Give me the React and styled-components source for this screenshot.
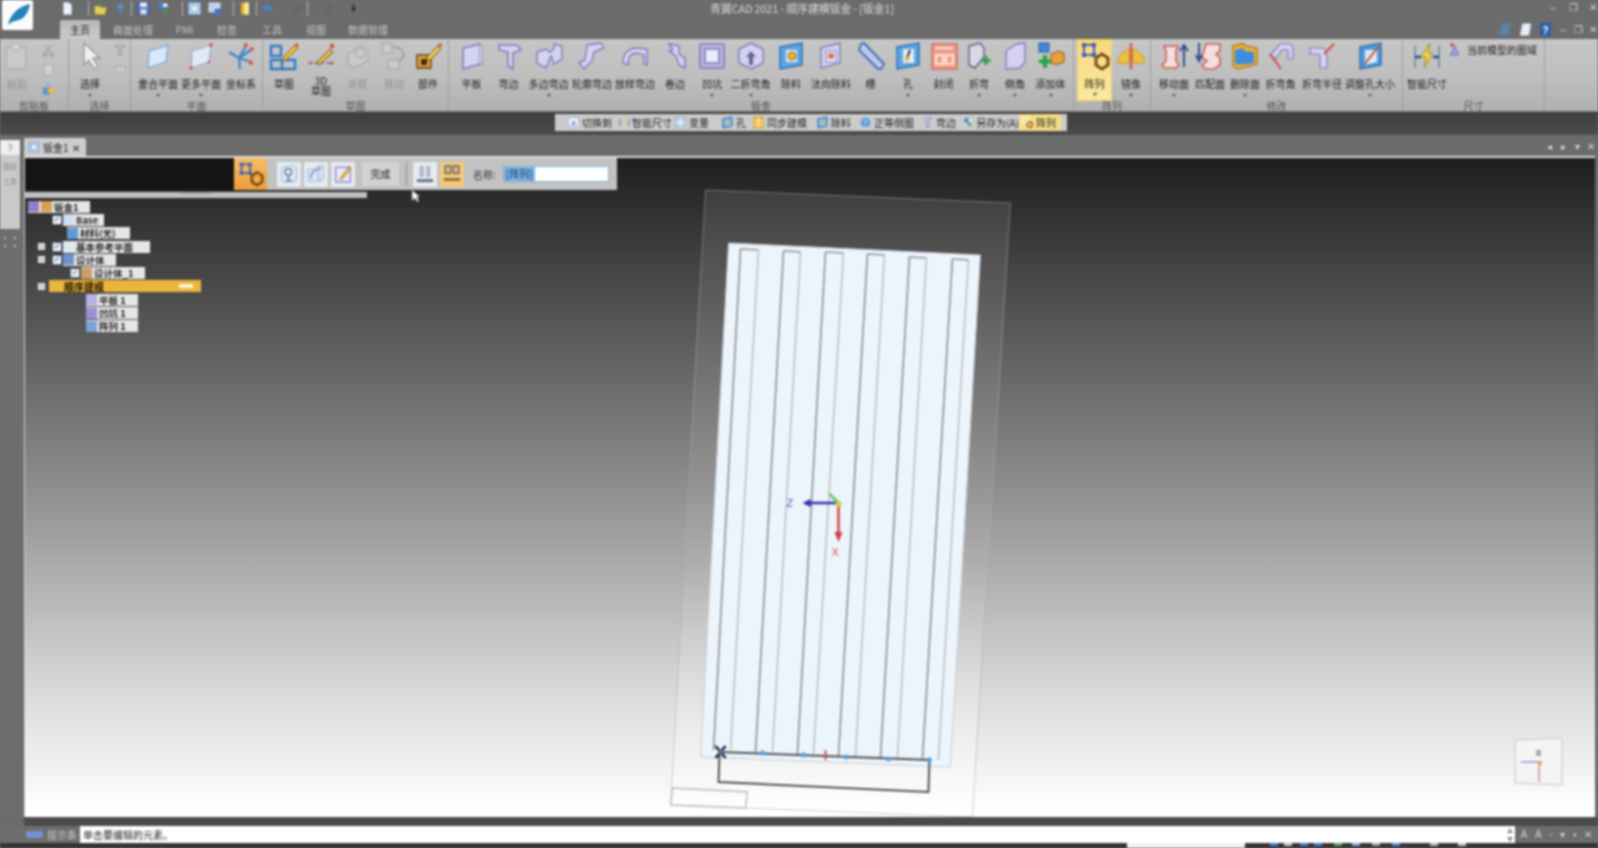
import React from "react";
import styled, { createGlobalStyle, css } from "styled-components";

const Global = createGlobalStyle`
  html, body { margin: 0; padding: 0; background: #6a6a6a; overflow: hidden; }
  * { box-sizing: border-box; }
`;

const P = { f: "#d4d2f0", l: "#ecebfa", s: "#7f7ab8" };

// ribbon pictures, all on a 30x30 grid
const art = {
  paste: <><rect x="4" y="6" width="20" height="22" rx="2" fill="#cdcdcd" stroke="#a5a5a5" strokeWidth="1.5" /><rect x="10" y="3" width="8" height="6" fill="#dedede" stroke="#a5a5a5" /></>,
  cut: <><path d="M8 4l12 14M21 4L9 18" stroke="#8c8c8c" strokeWidth="2" /><circle cx="8" cy="23" r="3.5" fill="none" stroke="#8c8c8c" strokeWidth="2" /><circle cx="21" cy="23" r="3.5" fill="none" stroke="#8c8c8c" strokeWidth="2" /></>,
  copy: <><path d="M8 6h10l5 5v14H8z" fill="#ddd" stroke="#aaa" strokeWidth="2" /><path d="M12 14h8M12 19h8" stroke="#bbb" strokeWidth="2" /></>,
  brush: <><rect x="5" y="14" width="12" height="12" fill="#5b9be0" stroke="#2f6db5" /><circle cx="20" cy="19" r="6" fill="#f1c24a" stroke="#b98a20" /><rect x="12" y="3" width="5" height="8" fill="#7ab0ea" /></>,
  arrow: <path d="M9 2v22l5-5 5 9 4-2-5-9h7z" fill="#f1f1f1" stroke="#959595" strokeWidth="1.3" />,
  filter: <><path d="M4 5h20l-8 9v9l-4 2V14z" fill="#bbb" stroke="#8a8a8a" strokeWidth="2" /></>,
  box: <rect x="5" y="8" width="20" height="14" rx="3" fill="#cfcfcf" stroke="#999" strokeWidth="2" />,
  plane: <path d="M6 10L25 4l-2 17L5 27z" fill="#dbe7f5" stroke="#7fb0e0" strokeWidth="1.5" />,
  plane2: <><path d="M6 10L25 4l-2 17L5 27z" fill="#e3e9f4" stroke="#8fa8cc" strokeWidth="1.2" /><g fill="#d9483a"><circle cx="25" cy="4" r="1.7" /><circle cx="5" cy="27" r="1.7" /><circle cx="23" cy="21" r="1.2" /></g></>,
  axes: <><path d="M13 17L20 5M13 17L3 11M13 17l1 11M13 17l12 4M13 17l13-9" stroke="#3c84c8" strokeWidth="2.2" fill="none" /><g fill="#e0503e"><circle cx="20" cy="4" r="2" /><circle cx="26" cy="8" r="2" /><circle cx="25" cy="22" r="2" /></g></>,
  sketch: <><rect x="2" y="5" width="10" height="10" fill="none" stroke="#2f78c8" strokeWidth="2.4" /><path d="M2 19h24v9H2zM13 19v9" fill="none" stroke="#2f78c8" strokeWidth="2.4" /><path d="M14 17L26 4l3 3-12 12-4 1z" fill="#f0c04a" stroke="#7a5a12" /><circle cx="27.5" cy="4" r="1.7" fill="#d9483a" /></>,
  draw: <><path d="M2 22h26" stroke="#7b78b8" strokeWidth="1.6" strokeDasharray="4 2" /><path d="M10 22L24 8l3 3-14 13z" fill="#eabf42" stroke="#5e4a12" /><g fill="#d9483a"><circle cx="26" cy="5" r="2.2" /><circle cx="5" cy="22" r="1.6" /><circle cx="25" cy="22" r="1.6" /></g></>,
  rings: <><path d="M5 13l13-8 7 4v10l-13 8-7-4z" fill="#cecece" stroke="#a2a2a2" strokeWidth="1.4" /><circle cx="17" cy="12" r="5" fill="none" stroke="#a2a2a2" strokeWidth="1.5" /></>,
  movebox: <><rect x="3" y="2" width="10" height="10" fill="#cfcfcf" stroke="#8e8e8e" /><rect x="9" y="19" width="11" height="9" fill="#cfcfcf" stroke="#8e8e8e" /><path d="M14 6c10 0 14 8 7 14" fill="none" stroke="#7d7d7d" strokeWidth="1.6" /></>,
  part: <><path d="M4 14h14v13H4z" fill="#e8a13a" stroke="#5e4012" strokeWidth="1.4" /><rect x="8" y="18" width="6" height="6" fill="#3b2d12" /><path d="M13 17L25 5l3 3-12 12z" fill="#efc656" stroke="#6a5216" /><circle cx="27" cy="4" r="1.8" fill="#d9483a" /></>,
  plate: <><path d="M6 7l17-4v20L6 28z" fill={P.f} stroke={P.s} strokeWidth="1.6" /><path d="M23 3l2 2v19l-2-1" fill={P.l} stroke={P.s} /></>,
  flange: <path d="M5 4h18l4 5-8 3v16l-5-3V11L5 9z" fill={P.f} stroke={P.s} strokeWidth="1.5" />,
  multi: <path d="M3 11l9-3 4 3 4-3V3l8 2v13l-8 5-3-8-5 12-9-5z" fill={P.f} stroke={P.s} strokeWidth="1.4" />,
  contour: <path d="M10 4l14-2 3 5-10 4-2 9-8 8-5-6 6-3z" fill={P.f} stroke={P.s} strokeWidth="1.4" />,
  loft: <path d="M3 22c0-10 6-15 14-15l10 1v16l-3-1v-9l-7-2c-6 0-9 4-9 12z" fill={P.f} stroke={P.s} strokeWidth="1.4" />,
  curl: <path d="M9 3l10 2v7l2 3 4 2v10l-6-3-3-9-7-5 4-1z" fill={P.f} stroke={P.s} strokeWidth="1.4" />,
  dimple: <><rect x="3" y="3" width="24" height="24" rx="2" fill="#b9b6de" stroke={P.s} strokeWidth="1.6" /><rect x="8" y="8" width="14" height="14" fill={P.l} stroke={P.s} strokeWidth="1.6" /></>,
  corner: <><path d="M15 2l12 6v14l-12 6-12-6V8z" fill={P.f} stroke={P.s} strokeWidth="1.4" /><path d="M15 10l-5 6h3v8h4v-8h3z" fill="#6a6890" /></>,
  cutout: <><path d="M4 6l22-4v22L4 28z" fill="#5aa6e4" stroke="#2c6cab" strokeWidth="1.4" /><rect x="10" y="9" width="11" height="12" fill="#e6edf5" /><circle cx="16" cy="15" r="4" fill="#efb637" stroke="#7d5e10" /></>,
  normal: <><path d="M5 7l19-5v20L5 27z" fill={P.f} stroke={P.s} strokeWidth="1.4" /><rect x="10" y="10" width="10" height="11" fill={P.l} stroke={P.s} /><circle cx="15" cy="15" r="3" fill="#d8704a" /></>,
  slot: <path d="M5 3l3-1 20 21-3 5-3 0L3 9z" fill="#bcc9ef" stroke="#4f6cb5" strokeWidth="2" />,
  hole: <><path d="M4 6l22-4v22L4 28z" fill="#5aa6e4" stroke="#2c6cab" strokeWidth="1.4" /><rect x="10" y="8" width="11" height="14" fill="#e6edf5" /><path d="M17 9l-3 8" stroke="#2a2a2a" strokeWidth="2" /><circle cx="14" cy="18" r="2.4" fill="#efb637" /></>,
  seal: <><rect x="3" y="3" width="25" height="25" fill="#ed9c8a" stroke="#d36a58" strokeWidth="1.4" /><path d="M6 7h18M7 14h7v9H7zM17 14h7v9h-7z" stroke="#fbe9d8" strokeWidth="2.2" fill="none" /></>,
  bend: <><path d="M5 5l11-3 4 5v9l-9 11-6-3z" fill="#d9d8e6" stroke="#5f5c80" strokeWidth="1.4" /><path d="M22 15v9M17.5 19.5h9" stroke="#2aa14c" strokeWidth="3" /></>,
  chamfer: <path d="M6 10l10-7 9-1v19l-5 6-14 1z" fill={P.f} stroke={P.s} strokeWidth="1.4" />,
  addbody: <><rect x="3" y="2" width="10" height="9" fill="#3f8ad8" stroke="#27609e" /><path d="M15 13l8-3 5 2v9l-8 3-5-2z" fill="#e8a13a" stroke="#87591a" /><path d="M9 14v13M3 20.5h12" stroke="#27a548" strokeWidth="4" /></>,
  pattern: <><path d="M4 4h10M4 4v10M14 4v10M4 14h10" stroke="#3f5fb4" strokeWidth="2" /><g fill="#3f5fb4"><rect x="2" y="2" width="4" height="4" /><rect x="12" y="2" width="4" height="4" /><rect x="2" y="12" width="4" height="4" /><rect x="12" y="12" width="4" height="4" /></g><path d="M22 13l6 4v7l-6 4-6-4v-7z" fill="none" stroke="#7a4a18" strokeWidth="3" /></>,
  mirror: <><path d="M13 8C6 10 2 16 2 22c4 1 9 0 11-1z" fill="#efc13a" stroke="#c9972a" /><path d="M17 8c7 2 11 8 11 14-4 1-9 0-11-1z" fill="#efc13a" stroke="#c9972a" /><path d="M15 2v26" stroke="#e0503e" strokeWidth="2.4" /></>,
  moveface: <><path d="M5 5h14l-2 5v10l3 4-3 3H6l-3-3 4-4V10z" fill="#f3dede" stroke="#cf5b52" strokeWidth="1.6" /><path d="M25 26V6M21 10l4-6 4 6" stroke="#2b4f8c" strokeWidth="2" fill="none" /></>,
  matchface: <><path d="M11 3h14v7l-4 3 4 4v7l-6 4h-8l-4-4 5-4-5-4z" fill="#f3dede" stroke="#cf5b52" strokeWidth="1.6" /><path d="M4 2v16M1 14l3 6 3-6" stroke="#2b4f8c" strokeWidth="2" fill="none" /></>,
  delface: <><path d="M3 5l10-3 3 3 11 2v16L8 28l-5-3z" fill="#e9b133" stroke="#b67f1c" strokeWidth="1.4" /><path d="M5 9l8-2 2 3 9 1v11L8 24l-3-2z" fill="#3c8ede" /></>,
  bendangle: <><path d="M5 13L14 3h8c4 0 5 3 5 6v9h-5V9h-6l-7 9z" fill={P.f} stroke={P.s} strokeWidth="1.2" /><path d="M4 13l11 15" stroke="#d9483a" strokeWidth="2" /></>,
  bendradius: <><path d="M3 7h11c5 0 6 4 6 8v12h-7V15c0-2-1-2-3-2H3z" fill={P.f} stroke={P.s} strokeWidth="1.2" /><path d="M17 13L27 3" stroke="#d9483a" strokeWidth="2" /></>,
  resize: <><path d="M5 6l21-4v22L5 28z" fill="#4f9ae0" stroke="#2c6cab" strokeWidth="1.4" /><path d="M10 9h12v12l-12 3z" fill="#dfe8f2" /><path d="M9 24L24 5" stroke="#b5562c" strokeWidth="2" /></>,
  dim: <><path d="M3 5v22M27 5v22" stroke="#7d93a8" strokeWidth="2" /><path d="M3 16h6M21 16h6" stroke="#1f4d8a" strokeWidth="2.4" /><path d="M18 2L9 16h5l-2 11 9-15h-5z" fill="#f1d344" stroke="#a5891e" /></>,
  region: <><path d="M3 26L12 8l7 18z" fill="#9aa9e0" stroke="#4f5fa8" strokeWidth="1.6" /><circle cx="6" cy="6" r="4" fill="#e0503e" /></>,
  doc: <path d="M7 3h11l5 5v19H7z" fill="#eef2f8" stroke="#b6c2d2" strokeWidth="1.6" />,
  folder: <><path d="M3 10h10l2 3h12l-3 14H4z" fill="#e8cf55" stroke="#9f8a2a" /><path d="M13 3l6 4-4 4" fill="#3fa34f" /></>,
  swap: <path d="M8 10l10-6v4l5 1-8 10v-5l-7 2zM12 19h9l-6 7z" fill="#5d8fd6" />,
  save: <><rect x="3" y="3" width="24" height="24" rx="3" fill="#4f6fc0" stroke="#2a4590" /><rect x="8" y="3" width="14" height="9" fill="#e8edf5" /><rect x="9" y="16" width="12" height="11" fill="#d5dcea" /></>,
  saveas: <><circle cx="11" cy="9" r="7" fill="#3f7fd0" /><path d="M12 14l12 6-6 7z" fill="#37a04b" /><rect x="14" y="5" width="9" height="7" fill="#e8edf5" /></>,
  view: <><rect x="3" y="3" width="24" height="24" fill="#b9d2ee" stroke="#5c8fc6" strokeWidth="1.5" /><rect x="9" y="9" width="12" height="12" fill="#e9f0f8" stroke="#5c8fc6" /></>,
  sheet: <><rect x="3" y="3" width="24" height="20" fill="#d8e3f0" stroke="#6d8fb8" /><path d="M3 9h24M10 9v14" stroke="#6d8fb8" /><rect x="15" y="15" width="13" height="13" fill="#4a74c2" /></>,
  stripes: <path d="M8 5h18M6 11h18M5 17h18M3 23h18" stroke="#4a9be6" strokeWidth="3.4" />,
  leaf: <path d="M9 3h17l-4 24H4z" fill="#e8eef6" stroke="#a8b8cc" strokeWidth="1.6" />,
  help: <><rect x="4" y="2" width="22" height="26" rx="2" fill="#2b5fa8" /><text x="9" y="23" fontFamily="Liberation Sans, sans-serif" fontWeight="700" fontSize="20" fill="#fff">?</text></>,
  marker: <><rect x="6" y="3" width="16" height="24" fill="#e9bb2f" stroke="#94721a" /><rect x="13" y="3" width="9" height="24" fill="#f7e9a4" /></>,
  undo: <path d="M5 15L15 5v6c8 0 11 5 10 13-2-5-5-7-10-7v7z" fill="#3f86d6" />,
  faint: <path d="M8 22L20 8l4 4-12 13z" fill="none" stroke="#5c5c5c" strokeWidth="2" />,
  tiny: <path d="M15 6v12M11 14l4 6 4-6" fill="none" stroke="#2e2e2e" strokeWidth="3" />,
  sw: <><rect x="4" y="4" width="22" height="22" fill="#eef" stroke="#88a" /><text x="9" y="22" fontFamily="Liberation Sans, sans-serif" fontSize="18" fill="#2f5fb5">A</text></>,
  vars: <><rect x="4" y="4" width="22" height="22" fill="#bcd3ea" stroke="#5c8fc6" /><path d="M15 4v22M4 15h22" stroke="#fff" strokeWidth="2" /></>,
  sync: <><rect x="4" y="2" width="22" height="26" fill="#ecb63a" stroke="#b98a20" /><path d="M15 2v26M4 11h22M4 20h22" stroke="#fff" strokeWidth="1.8" /></>,
  iso: <><circle cx="15" cy="15" r="11" fill="#4f95da" /><path d="M6 12c6 3 12 2 18-1M15 4v22" stroke="#cfe2f5" strokeWidth="1.6" fill="none" /></>,
  flangeS: <path d="M12 4h11l-5 7v15h-5V11L7 8z" fill="#d4d2f0" stroke="#6d68ad" strokeWidth="1.6" />,
  patternS: <><rect x="3" y="4" width="12" height="12" fill="none" stroke="#fff" strokeWidth="2.4" /><circle cx="20" cy="20" r="6" fill="none" stroke="#9a5a18" strokeWidth="3.4" /></>,
  smart: <><path d="M3 5v20M27 5v20" stroke="#4e68b0" strokeWidth="2.4" /><path d="M19 4L9 17h5l-3 9 10-13h-5z" fill="#f0d447" /></>,
  setA: <><path d="M4 5l16-3 6 3v20l-16 3-6-3z" fill="#dfe9f4" stroke="#76a3cf" /><circle cx="14" cy="12" r="5" fill="none" stroke="#586a8c" strokeWidth="2" /><path d="M14 17v7M10 25h10" stroke="#586a8c" strokeWidth="2" /></>,
  setB: <><path d="M3 8h18v18H3z" fill="#dfe9f4" stroke="#76a3cf" /><path d="M7 22c0-8 6-14 16-16" stroke="#9a95d0" strokeWidth="3" fill="none" /><rect x="17" y="3" width="9" height="20" fill="none" stroke="#76a3cf" /></>,
  setC: <><rect x="4" y="5" width="22" height="22" fill="#eceafb" stroke="#8c83cc" strokeWidth="2" /><path d="M10 22L24 4l3 3-14 17z" fill="#e8c848" stroke="#6a5616" /></>,
  toggleA: <><path d="M9 4v15M12 4v15M18 4v15M21 4v15" stroke="#8a8fa6" strokeWidth="1.6" /><rect x="4" y="22" width="22" height="4" fill="#6a6f86" /></>,
  toggleB: <><rect x="6" y="4" width="7" height="10" fill="none" stroke="#4a4a6a" strokeWidth="1.8" /><rect x="17" y="4" width="7" height="10" fill="none" stroke="#4a4a6a" strokeWidth="1.8" /><rect x="4" y="21" width="22" height="3" fill="#6a5a2a" /></>,
  logo: <path d="M5 25C7 15 14 7 27 4c-1 7-5 14-11 16-4 1-7 1-11 5z" fill="#2483b8" />,
};

const Glyph = ({ name, size = 30 }) => (
  <svg width={size} height={size} viewBox="0 0 30 30" aria-hidden="true">{art[name]}</svg>
);

const Page = styled.div`
  width: 1598px;
  height: 848px;
  display: flex;
  flex-direction: column;
  overflow: hidden;
  background: #6b6b6b;
  font-family: "Noto Sans CJK SC", "Liberation Sans", sans-serif;
  font-size: 10px;
  color: #222;
  filter: blur(0.8px);
`;

const Header = styled.header`
  height: 39px;
  display: flex;
  background: repeating-linear-gradient(0deg, #6a6a6a 0 2px, #6d6d6d 2px 4px);
`;

const AppButton = styled.div`
  width: 31px;
  height: 30px;
  margin-left: 2px;
  background: #fbfbfb;
  border-radius: 2px;
  display: flex;
  align-items: center;
  justify-content: center;
`;

const HeaderBody = styled.div`
  flex: 1;
  min-width: 0;
  display: flex;
  flex-direction: column;
`;

const TitleRow = styled.div`
  height: 15px;
  display: grid;
  grid-template-columns: 660px 1fr 200px;
  align-items: center;
`;

const QuickBar = styled.div`
  display: flex;
  align-items: center;
  padding-left: 24px;
  height: 15px;
`;

const QuickCell = styled.div`
  width: ${(p) => p.$w}px;
  display: flex;
  justify-content: center;
`;

const QuickSep = styled.span`
  width: 1px;
  height: 15px;
  margin: 0 1px;
  background: #b5b5b5;
`;

const Title = styled.div`
  color: #d9d9d9;
  font-size: 11px;
  letter-spacing: -0.2px;
  padding-left: 17px;
  white-space: nowrap;
`;

const WinControls = styled.div`
  display: flex;
  justify-content: flex-end;
  align-items: center;
  gap: ${(p) => p.$gap || 7}px;
  padding-right: ${(p) => p.$pad ?? 3}px;
  color: #d6d6d6;
`;

const TabControls = styled(WinControls)`
  flex: 1;
  height: 19px;
`;

const WinButton = styled.span`
  width: 10px;
  height: 10px;
  display: flex;
  align-items: center;
  justify-content: center;
  font-size: 10px;
  line-height: 1;
  font-family: "Liberation Sans", sans-serif;
`;

const TabRow = styled.nav`
  height: 24px;
  display: flex;
  align-items: flex-end;
  padding-left: 27px;
`;

const Tab = styled.div`
  width: ${(p) => p.$w}px;
  height: 19px;
  line-height: 19px;
  text-align: center;
  color: #c4c4c4;
  ${(p) =>
    p.$active &&
    css`
      background: linear-gradient(#b9b9b9, #cbcbcb);
      color: #222;
      border-radius: 2px 2px 0 0;
    `}
`;

const Ribbon = styled.section`
  height: 73px;
  display: flex;
  background: linear-gradient(#c6c6c6, #bfbfbf 50%, #b0b0b0);
  border-bottom: 1px solid #7a7a7a;
`;

const Group = styled.div`
  width: ${(p) => p.$w}px;
  flex: none;
  display: flex;
  flex-direction: column;
  border-right: 1px solid #9d9d9d;
`;

const GroupBody = styled.div`
  height: 62px;
  display: flex;
  padding-left: ${(p) => p.$pad || 0}px;
`;

const GroupLabel = styled.div`
  height: 10px;
  line-height: 10px;
  text-align: center;
  font-size: 10px;
  color: #555;
`;

const Big = styled.div`
  position: relative;
  flex: 0 0 ${(p) => p.$w}px;
  width: ${(p) => p.$w}px;
  display: flex;
  flex-direction: column;
  align-items: center;
  padding-top: 2px;
  ${(p) =>
    p.$active &&
    css`
      background: linear-gradient(#f8d978, #f9e090 45%, #fbe89f);
      border: 1px solid #f1cf6e;
      padding-top: 1px;
    `}
`;

const BigIcon = styled.div`
  height: 30px;
  display: flex;
  opacity: ${(p) => (p.$off ? 0.65 : 1)};
`;

const BigText = styled.div`
  margin-top: ${(p) => (p.$two ? 5 : 6)}px;
  white-space: pre;
  text-align: center;
  line-height: ${(p) => (p.$two ? 10 : 14)}px;
  font-size: 10px;
  color: ${(p) => (p.$off ? "#929292" : "#1c1c1c")};
`;

const Drop = styled.span`
  position: absolute;
  bottom: 2px;
  left: 50%;
  margin-left: -2px;
  border: 2px solid transparent;
  border-top: 3px solid #555;
`;

const SmallStack = styled.div`
  width: ${(p) => p.$w}px;
  display: flex;
  flex-direction: column;
  align-items: center;
  gap: 4px;
  padding-top: 4px;
  opacity: ${(p) => p.$dim || 1};
`;

const WideTool = styled.div`
  display: flex;
  align-items: center;
  gap: 3px;
  height: 17px;
  margin-top: 2px;
  white-space: nowrap;
`;

const Band = styled.div`
  height: 23px;
  padding: 2px 0 0 555px;
  background: linear-gradient(#3e3e3e, #4c4c4c);
`;

const ToolStrip = styled.div`
  width: 512px;
  height: 17px;
  display: flex;
  align-items: stretch;
  padding-left: 10px;
  background: #cbcbcb;
`;

const StripItem = styled.div`
  width: ${(p) => p.$w}px;
  display: flex;
  align-items: center;
  gap: 2px;
  padding-left: 2px;
  white-space: nowrap;
  ${(p) => p.$on && "background: #f6dd86;"}
`;

const Main = styled.div`
  flex: 1;
  min-height: 0;
  display: flex;
`;

const Rail = styled.aside`
  width: 24px;
  flex: none;
  padding-top: 5px;
  background: #6d6d6d;
`;

const RailPanel = styled.div`
  width: 20px;
  height: 89px;
  display: flex;
  flex-direction: column;
  align-items: center;
  gap: 7px;
  background: #c9c9c9;
  color: #8b8b8b;
  font-size: 7px;
  line-height: 8px;
`;

const RailTop = styled.div`
  width: 20px;
  height: 15px;
  background: #efefef;
  display: flex;
  align-items: center;
  justify-content: center;
  color: #777;
  font-size: 10px;
`;

const RailDots = styled.div`
  width: 14px;
  margin: 8px 0 0 4px;
  display: grid;
  grid-template-columns: 1fr 1fr;
  gap: 6px;
`;

const RailDot = styled.span`
  width: 2px;
  height: 2px;
  background: #bbb;
`;

const Center = styled.div`
  flex: 1;
  min-width: 0;
  display: flex;
  flex-direction: column;
`;

const DocStrip = styled.div`
  height: 21px;
  display: flex;
  justify-content: space-between;
  padding-top: 3px;
`;

const DocTab = styled.div`
  width: 62px;
  display: flex;
  align-items: center;
  gap: 3px;
  padding-left: 4px;
  background: #cdcdcd;
  border-radius: 2px 2px 0 0;
  white-space: nowrap;
`;

const Viewport = styled.div`
  position: relative;
  height: 661px;
  margin-right: 3px;
  border-top: 2px solid #dcdcdc;
  border-left: 1px solid #d0d0d0;
  background: linear-gradient(#1e1e1e, #2c2c2c 6%, #8e8e8e 50%, #dcdcdc 82%, #ffffff 99%);
  overflow: hidden;
`;

const Scene = styled.svg`
  position: absolute;
  inset: 0;
  width: 100%;
  height: 100%;
`;

const CmdRow = styled.div`
  position: relative;
  height: 32px;
  display: flex;
`;

const CmdFill = styled.div`
  width: 209px;
  background: #151515;
`;

const CmdBar = styled.div`
  width: 383px;
  height: 32px;
  display: flex;
  align-items: center;
  background: #c2c2c2;
`;

const CmdMain = styled.div`
  width: 33px;
  height: 32px;
  display: flex;
  align-items: center;
  justify-content: center;
  background: linear-gradient(#f5bd66, #ee9f3c);
  margin-right: 10px;
`;

const CmdIcon = styled.div`
  width: 24px;
  height: 25px;
  margin-right: ${(p) => p.$gap ?? 3}px;
  display: flex;
  align-items: center;
  justify-content: center;
  background: ${(p) => (p.$on ? "#f4c978" : "#e4ebf2")};
`;

const DoneButton = styled.div`
  width: 37px;
  height: 24px;
  margin: 0 7px 0 4px;
  line-height: 24px;
  text-align: center;
  background: #d2d2d2;
`;

const CmdSep = styled.span`
  width: 1px;
  height: 26px;
  margin-right: 6px;
  background: #8f8f8f;
`;

const NameLabel = styled.span`
  margin: 0 7px 0 9px;
  color: #3c3c3c;
  white-space: nowrap;
`;

const NameInput = styled.div`
  width: 106px;
  height: 16px;
  display: flex;
  background: #fff;
  border: 1px solid #7fb4da;
`;

const NameValue = styled.span`
  padding: 0 2px;
  line-height: 14px;
  background: #7db3e0;
  color: #123a66;
  white-space: nowrap;
`;

const Splitter = styled.div`
  position: relative;
  width: 342px;
  height: 6px;
  margin-top: 2px;
  display: flex;
  justify-content: center;
  background: #bfbfbf;
`;

const Grip = styled.span`
  width: 34px;
  height: 1px;
  margin-top: 1px;
  background: #8a92b0;
`;

const Tree = styled.div`
  position: relative;
  margin-top: 2px;
  display: grid;
  grid-auto-rows: 13.3px;
`;

const Row = styled.div`
  display: flex;
  align-items: center;
  height: 13.3px;
`;

const Expander = styled.span`
  width: 7px;
  height: 7px;
  margin-left: 13px;
  flex: none;
  background: #cdcdcd;
  border: 1px solid #eee;
  ${(p) => p.$blank && "visibility: hidden;"}
`;

const Check = styled.span`
  width: 10px;
  height: 10px;
  margin-left: ${(p) => p.$ml}px;
  flex: none;
  background: #eef1f6;
  border: 1px solid #5a6a8a;
  color: #1f2c4a;
  font: 700 8px/8px "DejaVu Sans", sans-serif;
  text-align: center;
  &::after {
    content: "✓";
  }
`;

const Node = styled.span`
  height: 12px;
  width: ${(p) => p.$w}px;
  margin-left: ${(p) => p.$ml || 0}px;
  flex: none;
  display: flex;
  align-items: center;
  gap: 2px;
  font-size: 9.5px;
  font-weight: 700;
  line-height: 12px;
  background: #e6e6e6;
  color: #262626;
  white-space: nowrap;
`;

const NodeIcon = styled.span`
  width: 11px;
  height: 11px;
  flex: none;
  background: ${(p) => p.$c};
`;

const CurrentNode = styled.span`
  width: 152px;
  height: 12px;
  margin-left: 4px;
  flex: none;
  padding-left: 15px;
  display: flex;
  justify-content: space-between;
  align-items: center;
  font-size: 10px;
  font-weight: 700;
  color: #1c1200;
  background: #eab53b;
`;

const CurrentMark = styled.span`
  width: 14px;
  height: 4px;
  margin-right: 8px;
  background: #fff4d8;
`;

const Pointer = styled.svg`
  position: absolute;
  left: 386px;
  top: 31px;
`;

const Footer = styled.footer`
  height: 31px;
  display: flex;
  flex-direction: column;
`;

const FootEdge = styled.div`
  height: 9px;
  margin-left: 24px;
  background: #4a4a4a;
`;

const PromptRow = styled.div`
  height: 17px;
  display: flex;
  align-items: center;
  background: #6d6d6d;
`;

const PromptBadge = styled.span`
  width: 17px;
  height: 7px;
  margin-left: 26px;
  border-radius: 1px;
  background: #6d94cf;
`;

const PromptLabel = styled.span`
  width: 37px;
  padding-left: 4px;
  color: #c8c8c8;
  white-space: nowrap;
`;

const PromptInput = styled.div`
  flex: 1;
  height: 17px;
  line-height: 17px;
  padding-left: 3px;
  display: flex;
  justify-content: space-between;
  background: #fff;
  color: #222;
`;

const PromptSpin = styled.div`
  width: 10px;
  display: flex;
  flex-direction: column;
  align-items: center;
  justify-content: center;
  gap: 2px;
  color: #888;
  font-size: 6px;
  line-height: 6px;
`;

const PromptTools = styled.div`
  width: 83px;
  display: flex;
  justify-content: space-around;
  align-items: center;
  padding: 0 2px;
  color: #d4d4d4;
  font-size: 10px;
  font-family: "Liberation Sans", sans-serif;
`;

const Taskbar = styled.div`
  height: 5px;
  display: flex;
  align-items: flex-start;
  background: #333;
  padding-left: 1127px;
`;

const TaskField = styled.span`
  width: 118px;
  height: 5px;
  margin-right: 25px;
  background: #f2f2f2;
`;

const TaskIcon = styled.span`
  width: 8px;
  height: 3px;
  margin-right: ${(p) => p.$gap}px;
  background: ${(p) => p.$c};
`;

const quick = [
  ["doc", 20], [null, 10], "|", ["folder", 20], ["swap", 20], "|", ["save", 20], ["saveas", 20], [null, 8], "|",
  ["view", 20], ["sheet", 20], [null, 8], "|", ["marker", 20], "|", ["undo", 18], [null, 12], ["faint", 18], "|",
  [null, 8], ["faint", 20], [null, 8], ["tiny", 16],
];

const tabs = [
  ["主页", 40, true], ["曲面处理", 66], ["PMI", 37], ["检查", 48], ["工具", 42], ["视图", 46], ["数据管理", 58],
];

const groups = [
  { label: "选择", w: 62, items: [["arrow", "选择", 42, false, true]], stack: { w: 18, dim: 0.7, icons: ["filter", "box"] } },
  { label: "平面", w: 132, pad: 5, items: [["plane", "重合平面", 44, false, true], ["plane2", "更多平面", 42, false, true], ["axes", "坐标系", 38]] },
  { label: "草图", w: 186, pad: 1, items: [["sketch", "草图", 40], ["draw", "3D\n草图", 34], ["rings", "关联", 39, true], ["movebox", "移动", 34, true], ["part", "部件", 34]] },
  { label: "钣金", w: 625, pad: 4, items: [
    ["plate", "平板", 37], ["flange", "弯边", 37], ["multi", "多边弯边", 43, false, true], ["contour", "轮廓弯边", 44], ["loft", "放样弯边", 42],
    ["curl", "卷边", 38], ["dimple", "凹坑", 36, false, true], ["corner", "二折弯角", 41, false, true], ["cutout", "除料", 40], ["normal", "法向除料", 40],
    ["slot", "槽", 39], ["hole", "孔", 36, false, true], ["seal", "封闭", 35], ["bend", "折弯", 36, false, true], ["chamfer", "倒角", 36, false, true], ["addbody", "添加体", 35, false, true],
  ] },
  { label: "阵列", w: 77, pad: 3, items: [["pattern", "阵列", 35, false, true, true], ["mirror", "镜像", 38, false, true]] },
  { label: "修改", w: 252, pad: 4, items: [
    ["moveface", "移动面", 38, false, true], ["matchface", "匹配面", 34], ["delface", "删除面", 36, false, true], ["bendangle", "折弯角", 35],
    ["bendradius", "折弯半径", 48], ["resize", "调整孔大小", 48, false, true],
  ] },
];

const strip = [
  ["sw", "切换到", 52], ["smart", "智能尺寸", 55], ["vars", "变量", 47], ["cutout", "孔", 31], ["sync", "同步建模", 64], ["cutout", "除料", 43],
  ["iso", "正等侧图", 62], ["flangeS", "弯边", 42], ["saveas", "另存为(A)", 58], ["patternS", "阵列", 42, true],
];

const BigButton = ({ icon, text, w, off, drop, active }) => (
  <Big $w={w} $active={active}>
    <BigIcon $off={off}><Glyph name={icon} /></BigIcon>
    <BigText $off={off} $two={text.includes("\n")}>{text}</BigText>
    {drop && <Drop />}
  </Big>
);

const slots = [
  [740, 249, 758, 713, 730, 750],
  [783, 251, 800, 755, 772, 752],
  [825, 252, 843, 797, 813, 754],
  [867, 254, 884, 838, 855, 756],
  [909, 257, 926, 880, 897, 758],
  [952, 259, 968, 922, 938, 760],
];

const SheetModel = () => (
  <Scene viewBox="24 158 1571 659" preserveAspectRatio="none">
    <defs>
      <linearGradient id="veil" x1="0" y1="0" x2="0" y2="1">
        <stop offset="0" stopColor="#fff" stopOpacity="0.1" />
        <stop offset="0.6" stopColor="#fff" stopOpacity="0.05" />
        <stop offset="1" stopColor="#fff" stopOpacity="0.35" />
      </linearGradient>
    </defs>
    <path d="M705 190L1010 203 972 817 670 805z" fill="url(#veil)" stroke="#a8a8a8" strokeOpacity="0.55" />
    <path d="M672 788L747 792 745 808 670 805z" fill="none" stroke="#bbb" strokeWidth="1.4" />
    <path d="M728 243L980 255 950 767 700 757z" fill="#ecf4fc" stroke="#c8ccd2" />
    {slots.map(([tl, ty, tr, bl, br, by]) => (
      <g key={tl} fill="none">
        <path d={`M${tl} ${ty}L${bl} ${by}`} stroke="#8c8e91" strokeWidth="1.6" />
        <path d={`M${tl} ${ty}L${tr} ${ty + 1}`} stroke="#929292" strokeWidth="1.4" />
        <path d={`M${tr} ${ty + 1}L${br} ${by}`} stroke="#b4b6b9" strokeWidth="1.3" />
      </g>
    ))}
    <path d="M719 752L929 760 928 792 718 782z" fill="none" stroke="#505050" strokeWidth="2" />
    <path d="M825 750v10" stroke="#c8504a" strokeWidth="2" />
    <g fill="#4f9fe6">
      <circle cx="762" cy="753" r="2.5" /><circle cx="803" cy="755" r="2.5" /><circle cx="846" cy="757" r="2.5" />
      <circle cx="888" cy="759" r="2.5" /><circle cx="929" cy="760" r="2.5" />
    </g>
    <path d="M715 746l10 12M725 746l-10 12" stroke="#1e2430" strokeWidth="2.6" />
    <circle cx="720" cy="752" r="2.2" fill="#3c86d8" />
    <path d="M838 503H806" stroke="#2f2fb0" strokeWidth="2.4" />
    <path d="M810 499l-8 4 8 4z" fill="#2f2fb0" />
    <text x="786" y="507" fontFamily="Liberation Sans, sans-serif" fontSize="11" fill="#4a55b8">Z</text>
    <path d="M838 503v34" stroke="#d23c3c" strokeWidth="2.4" />
    <path d="M834 532l4 10 4-10z" fill="#d23c3c" />
    <text x="831" y="556" fontFamily="Liberation Sans, sans-serif" fontSize="11" fill="#d4544c">X</text>
    <path d="M838 503l-9-9" stroke="#5ed05e" strokeWidth="3" />
    <circle cx="838" cy="504" r="3" fill="#d8c83c" />
    <path d="M1515 740l47-2v47l-47-2z" fill="#f4f4f4" stroke="#c4c4c4" />
    <path d="M1521 762h18" stroke="#8a8ae0" strokeWidth="1.4" />
    <path d="M1539 762v20" stroke="#d88080" strokeWidth="1.4" />
    <path d="M1536 750h5v6h-5z" fill="#aaa" />
    <circle cx="1540" cy="763" r="2.2" fill="#c9b840" />
  </Scene>
);

export default function App() {
  return (
    <>
      <Global />
      <Page>
        <Header>
          <AppButton><Glyph name="logo" /></AppButton>
          <HeaderBody>
            <TitleRow>
              <QuickBar>
                {quick.map((q, i) =>
                  q === "|" ? (
                    <QuickSep key={i} />
                  ) : (
                    <QuickCell key={i} $w={q[1]}>{q[0] && <Glyph name={q[0]} size={15} />}</QuickCell>
                  )
                )}
              </QuickBar>
              <Title>青翼CAD 2021 - 顺序建模钣金 - [钣金1]</Title>
              <WinControls $gap={10} $pad={0}>
                <WinButton>–</WinButton>
                <WinButton>❐</WinButton>
                <WinButton>✕</WinButton>
              </WinControls>
            </TitleRow>
            <TabRow>
              {tabs.map(([t, w, on]) => (
                <Tab key={t} $w={w} $active={on}>{t}</Tab>
              ))}
              <TabControls $gap={5} $pad={0}>
                <Glyph name="stripes" size={15} />
                <Glyph name="leaf" size={15} />
                <Glyph name="help" size={15} />
                <WinButton>–</WinButton>
                <WinButton>❐</WinButton>
                <WinButton>✕</WinButton>
              </TabControls>
            </TabRow>
          </HeaderBody>
        </Header>

        <Ribbon>
          <Group $w={69}>
            <GroupBody>
              <BigButton icon="paste" text="粘贴" w={34} off />
              <SmallStack $w={28}>
                <Glyph name="cut" size={15} />
                <Glyph name="copy" size={15} />
                <Glyph name="brush" size={15} />
              </SmallStack>
            </GroupBody>
            <GroupLabel>剪贴板</GroupLabel>
          </Group>
          {groups.map((g) => (
            <Group key={g.label} $w={g.w}>
              <GroupBody $pad={g.pad}>
                {g.items.map(([icon, text, w, off, drop, active]) => (
                  <BigButton key={text} icon={icon} text={text} w={w} off={off} drop={drop} active={active} />
                ))}
                {g.stack && (
                  <SmallStack $w={g.stack.w} $dim={g.stack.dim}>
                    {g.stack.icons.map((n) => <Glyph key={n} name={n} size={15} />)}
                  </SmallStack>
                )}
              </GroupBody>
              <GroupLabel>{g.label}</GroupLabel>
            </Group>
          ))}
          <Group $w={142}>
            <GroupBody $pad={2}>
              <BigButton icon="dim" text="智能尺寸" w={44} />
              <WideTool>
                <Glyph name="region" size={15} />
                当前模型的图域
              </WideTool>
            </GroupBody>
            <GroupLabel>尺寸</GroupLabel>
          </Group>
        </Ribbon>

        <Band>
          <ToolStrip>
            {strip.map(([icon, text, w, on]) => (
              <StripItem key={text} $w={w} $on={on}>
                <Glyph name={icon} size={13} />
                {text}
              </StripItem>
            ))}
          </ToolStrip>
        </Band>

        <Main>
          <Rail>
            <RailPanel>
              <RailTop>?</RailTop>
              <span>路径</span>
              <span>工具</span>
            </RailPanel>
            <RailDots>
              <RailDot /><RailDot /><RailDot /><RailDot />
            </RailDots>
          </Rail>
          <Center>
            <DocStrip>
              <DocTab>
                <Glyph name="view" size={12} />
                钣金1
                <span>✕</span>
              </DocTab>
              <WinControls $gap={4} $pad={2}>
                <WinButton>◂</WinButton>
                <WinButton>▸</WinButton>
                <WinButton>▾</WinButton>
                <WinButton>✕</WinButton>
              </WinControls>
            </DocStrip>
            <Viewport>
              <SheetModel />
              <CmdRow>
                <CmdFill />
                <CmdBar>
                  <CmdMain><Glyph name="pattern" size={26} /></CmdMain>
                  <CmdIcon><Glyph name="setA" size={20} /></CmdIcon>
                  <CmdIcon><Glyph name="setB" size={20} /></CmdIcon>
                  <CmdIcon><Glyph name="setC" size={20} /></CmdIcon>
                  <DoneButton>完成</DoneButton>
                  <CmdSep />
                  <CmdIcon><Glyph name="toggleA" size={22} /></CmdIcon>
                  <CmdIcon $on $gap={0}><Glyph name="toggleB" size={22} /></CmdIcon>
                  <NameLabel>名称:</NameLabel>
                  <NameInput><NameValue>[阵列]</NameValue></NameInput>
                </CmdBar>
              </CmdRow>
              <Splitter><Grip /></Splitter>
              <Tree>
                <Row><Node $w={62} $ml={3}><NodeIcon $c="#8f7fc4" /><NodeIcon $c="#d8a050" />钣金1</Node></Row>
                <Row><Expander $blank /><Check $ml={7} /><Node $w={41} $ml={1}><NodeIcon $c="#cfe0f0" />Base</Node></Row>
                <Row><Expander $blank /><Node $w={63} $ml={22}><NodeIcon $c="#5d9ad6" />材料(无)</Node></Row>
                <Row><Expander /><Check $ml={7} /><Node $w={87} $ml={1}><NodeIcon $c="#dfe8f2" />基本参考平面</Node></Row>
                <Row><Expander /><Check $ml={7} /><Node $w={53} $ml={1}><NodeIcon $c="#6f93d0" />设计体</Node></Row>
                <Row><Expander $blank /><Check $ml={25} /><Node $w={64} $ml={1}><NodeIcon $c="#c9a06a" />设计体_1</Node></Row>
                <Row><Expander /><CurrentNode>顺序建模<CurrentMark /></CurrentNode></Row>
                <Row><Expander $blank /><Node $w={52} $ml={41}><NodeIcon $c="#b8b2e4" />平板 1</Node></Row>
                <Row><Expander $blank /><Node $w={52} $ml={41}><NodeIcon $c="#9a90d4" />凹坑 1</Node></Row>
                <Row><Expander $blank /><Node $w={52} $ml={41}><NodeIcon $c="#7fa2d8" />阵列 1</Node></Row>
              </Tree>
              <Pointer width="10" height="14" viewBox="0 0 10 14">
                <path d="M1 1v11l3-3 2 4 2-1-2-4h3z" fill="#fff" stroke="#555" strokeWidth="0.6" />
              </Pointer>
            </Viewport>
          </Center>
        </Main>

        <Footer>
          <FootEdge />
          <PromptRow>
            <PromptBadge />
            <PromptLabel>提示条</PromptLabel>
            <PromptInput>
              单击要编辑的元素。
              <PromptSpin><span>▲</span><span>▼</span></PromptSpin>
            </PromptInput>
            <PromptTools>
              <span>A</span><span>A</span><span>▫</span><span>▾</span><span>▪</span><span>✕</span>
            </PromptTools>
          </PromptRow>
          <Taskbar>
            <TaskField />
            <TaskIcon $c="#3f7fd0" $gap={6} />
            <TaskIcon $c="#b8c4d4" $gap={8} />
            <TaskIcon $c="#3f7fd0" $gap={6} />
            <TaskIcon $c="#3f7fd0" $gap={12} />
            <TaskIcon $c="#58a85a" $gap={10} />
            <TaskIcon $c="#8fa8cc" $gap={12} />
            <TaskIcon $c="#aaa" $gap={12} />
            <TaskIcon $c="#5c90d8" $gap={30} />
            <TaskIcon $c="#bbb" $gap={20} />
            <TaskIcon $c="#ccc" $gap={20} />
          </Taskbar>
        </Footer>
      </Page>
    </>
  );
}
